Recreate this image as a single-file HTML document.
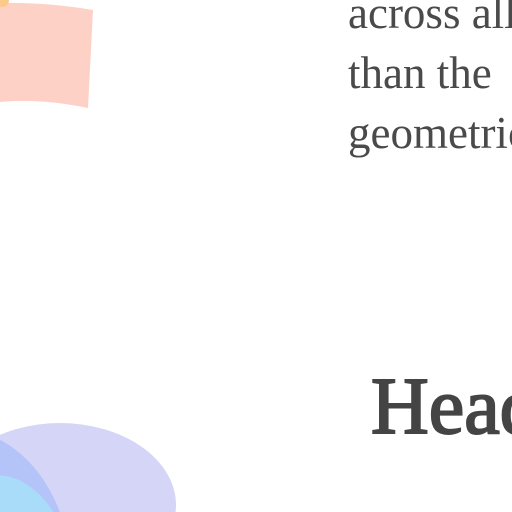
<!DOCTYPE html>
<html><head><style>
html,body{margin:0;padding:0;width:512px;height:512px;overflow:hidden;background:#fff;position:relative}
.t{position:absolute;left:348px;font-family:"Liberation Serif",serif;color:#4a4a4a;font-size:45px;white-space:nowrap;line-height:1}
</style></head><body>
<svg width="512" height="512" style="position:absolute;left:0;top:0">
<path d="M0 3 Q45 2 93 10 L88 108 Q40 98 0 102 Z" fill="#fdd1c6"/>
<circle cx="2" cy="0" r="7" fill="#fbc98a"/>
<ellipse cx="60" cy="505" rx="116" ry="82" fill="#d5d5f8"/>
<ellipse cx="-40" cy="580" rx="112" ry="150" fill="#b4c4f8"/>
<ellipse cx="-5" cy="575" rx="75" ry="100" fill="#a8dcf8"/>
</svg>
<div class="t" style="top:-9px">across all</div>
<div class="t" style="top:51px">than the</div>
<div class="t" style="top:111px">geometric</div>
<div class="t" style="left:371px;top:367px;font-size:80px;color:#444;-webkit-text-stroke:2px #444">Head</div>
</body></html>
